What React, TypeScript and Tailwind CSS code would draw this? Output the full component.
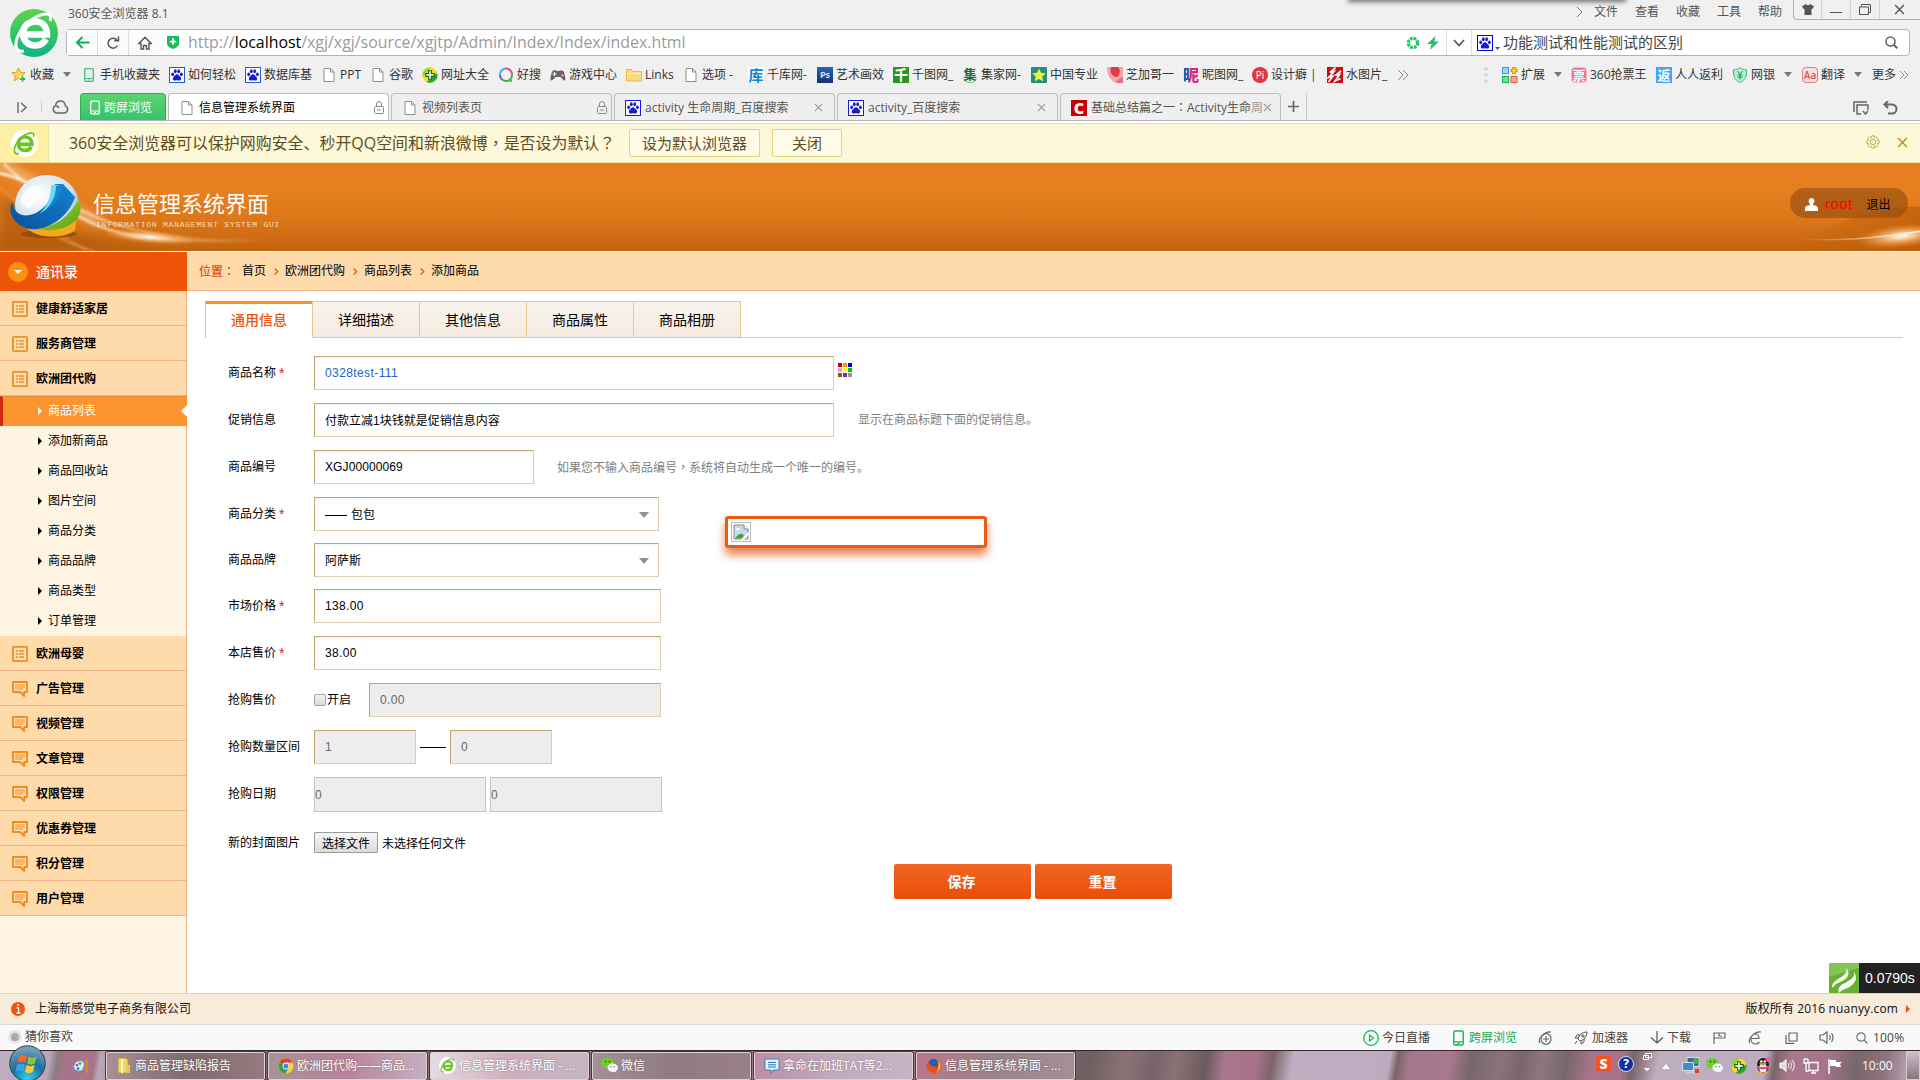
import React from 'react';

type IconName =
  | 'star' | 'phone' | 'baidu' | 'page' | 'plus' | 'so' | 'game' | 'folder' | 'ku' | 'ps' | 'qian' | 'ji'
  | 'cnstar' | 'petal' | 'ni' | 'pi' | 'hong' | 'ext' | 'ticket' | 'fan' | 'shield' | 'aa';

function Tile({ bg, fg, ch, cls = '' }: { bg: string; fg: string; ch: string; cls?: string }) {
  return (
    <span className={`flex h-4 w-4 items-center justify-center text-[13px] leading-4 font-bold ${bg} ${fg} ${cls}`}>{ch}</span>
  );
}

/* Full-width punctuation set in the centre of its em box. */
function Mid({ children }: { children: React.ReactNode }) {
  return <span className="[font-family:'Noto_Sans_CJK_TC',sans-serif]" lang="zh-TW">{children}</span>;
}

function Baidu({ frame = '#1414d8' }: { frame?: string }) {
  return (
    <svg width="16" height="16" viewBox="0 0 16 16" className="flex-none">
      <rect x="0.5" y="0.5" width="15" height="15" fill="#fff" stroke={frame} />
      <g fill="#1a1ad6">
        <ellipse cx="3.7" cy="7.3" rx="1.4" ry="1.9" />
        <ellipse cx="6.3" cy="4.3" rx="1.4" ry="2" />
        <ellipse cx="9.7" cy="4.3" rx="1.4" ry="2" />
        <ellipse cx="12.4" cy="7.3" rx="1.4" ry="1.9" />
        <path d="M8 7.2c1.7 0 2 1.500 3.300 2.600 1.300 1.100 1.300 3.700-1 3.800-1 0-1.400-.3-2.300-.3s-1.300.3-2.300.3c-2.300-.1-2.300-2.700-1-3.800C6 8.700 6.300 7.200 8 7.200z" />
      </g>
    </svg>
  );
}

function PageIcon() {
  return (
    <svg width="12" height="14" viewBox="0 0 12 14" className="flex-none">
      <path d="M1 .5h6.500L11 4v9.500H1z" fill="#fff" stroke="#8f8f8f" />
      <path d="M7.500.5V4H11" fill="none" stroke="#8f8f8f" />
    </svg>
  );
}

function PhoneIcon({ c = '#3fc178', w = 10, h = 14 }: { c?: string; w?: number; h?: number }) {
  return (
    <svg width={w} height={h} viewBox="0 0 10 14" className="flex-none">
      <rect x="0.700" y="0.700" width="8.600" height="12.600" rx="1" fill="none" stroke={c} strokeWidth="1.300" />
      <path d="M1 10.500h8M4 12h2" stroke={c} strokeWidth="1.200" />
    </svg>
  );
}

function GreenPlus({ size = 16 }: { size?: number }) {
  return (
    <svg width={size} height={size} viewBox="0 0 16 16" className="flex-none">
      <circle cx="8" cy="8" r="7.600" fill="#f8dc1c" />
      <path d="M15.400 6.500A7.600 7.600 0 0 1 4 14.500C8 14 9 10 12 8z" fill="#2ea52a" />
      <path d="M.5 9A7.600 7.600 0 0 1 9 .5C6 2 6 5 4 7z" fill="#8fd42c" />
      <path d="M8 3.200v9.600M3.200 8h9.600" stroke="#0d6e18" strokeWidth="3.800" />
      <path d="M8 4.200v7.600M4.200 8h7.600" stroke="#fff" strokeWidth="1.600" />
    </svg>
  );
}

function Icon({ n }: { n: IconName }) {
  switch (n) {
    case 'star':
      return (
        <svg width="16" height="16" viewBox="0 0 16 16">
          <path d="M7.500 1l2 4.300 4.700.5-3.400 3.200.9 4.800-4.200-2.400-4.200 2.400.9-4.800L.8 5.800l4.700-.5z" fill="#ffd45a" stroke="#e0a020" />
          <path d="M11.500 9v6M8.500 12h6" stroke="#fff" strokeWidth="4" />
          <path d="M11.500 9.300v5.500M8.800 12h5.500" stroke="#3cb34c" strokeWidth="2" />
        </svg>
      );
    case 'phone': return <PhoneIcon />;
    case 'baidu': return <Baidu frame="#1c5fc8" />;
    case 'page': return <PageIcon />;
    case 'plus': return <GreenPlus />;
    case 'so':
      return (
        <svg width="16" height="16" viewBox="0 0 16 16" fill="none" strokeWidth="2">
          <path d="M8 1.500A6 6 0 0 0 2 8" stroke="#35b2e8" />
          <path d="M8 1.500a6 6 0 0 1 6 6" stroke="#e8458c" />
          <path d="M2 8a6 6 0 0 0 3 5.200" stroke="#9a4fd0" />
          <path d="M14 7.500a6 6 0 0 1-9 5.700M11.500 12l2 2.700" stroke="#37b54a" />
        </svg>
      );
    case 'game':
      return (
        <svg width="16" height="16" viewBox="0 0 16 16">
          <path d="M3 3.500C6 2.500 7 4.500 9 4c3-1 4.500-.5 5 1.500 1 3 2 7 1 8-2 .5-3-3-5-3.500H6c-2 .5-3 4-5 3.500-1-1.500 0-8 2-10z" fill="#5d666b" />
          <path d="M4.500 5v4M2.500 7h4" stroke="#fff" strokeWidth="1.200" />
          <circle cx="11" cy="6" r="1.200" fill="#e33" />
          <circle cx="12.500" cy="8.500" r="1.200" fill="#e8a0a0" />
        </svg>
      );
    case 'folder':
      return (
        <svg width="16" height="14" viewBox="0 0 16 14">
          <path d="M.5 2V13h15V3.500H7L5.500 1.500H.5z" fill="#f9dc80" stroke="#eab93a" />
          <path d="M1 5.500h14" stroke="#fff3bd" />
        </svg>
      );
    case 'ku': return <Tile bg="bg-white" fg="text-[#0e86d8]" ch="库" cls="text-[15px]" />;
    case 'ps':
      return <span className="flex h-4 w-4 items-center justify-center bg-gradient-to-b from-[#2e63b8] to-[#12336e] text-[9px] leading-4 font-bold text-[#cfe4ff]">Ps</span>;
    case 'qian': return <Tile bg="bg-[#27951d]" fg="text-white" ch="千" cls="text-[14px]" />;
    case 'ji': return <Tile bg="bg-transparent" fg="text-[#1c6a38]" ch="集" cls="rounded-full border-b border-[#6ccf4a]" />;
    case 'cnstar':
      return (
        <svg width="16" height="16" viewBox="0 0 16 16">
          <rect width="16" height="16" rx="1" fill="#23907e" />
          <path d="M8 1.500l2 4.300 4.800.6-3.500 3.200.9 4.700L8 12l-4.200 2.300.9-4.700L1.200 6.400 6 5.800z" fill="#e8f23a" />
        </svg>
      );
    case 'petal':
      return (
        <svg width="16" height="16" viewBox="0 0 16 16">
          <path d="M0 0h16v16H9C3 13 0 8 0 0z" fill="#f0a5a8" />
          <path d="M4 0h7c3 3 2 8-1 10C6 10 2 6 4 0z" fill="#dc3b48" />
          <path d="M9 16c2-4 4-5 7-6v6z" fill="#e4707a" />
        </svg>
      );
    case 'ni':
      return (
        <span className="flex h-4 w-4 items-center justify-center bg-gradient-to-r from-[#1d5fa8] from-45% to-[#d5257f] to-45% bg-clip-text text-[16px] leading-4 font-black text-transparent">昵</span>
      );
    case 'pi':
      return <span className="flex h-4 w-4 items-center justify-center rounded-full bg-[#dc3a3a] text-[10px] leading-4 text-white">Pi</span>;
    case 'hong':
      return (
        <svg width="16" height="16" viewBox="0 0 16 16">
          <rect width="16" height="16" fill="#c50d12" />
          <path d="M8.500.5L3 5.500l4-1-5.500 6 4.500-1.500L1.500 15M14 4L8.500 8.500l4-1L8 14l5.500-2.500" fill="none" stroke="#fff" strokeWidth="1.700" />
        </svg>
      );
    case 'ext':
      return (
        <svg width="16" height="16" viewBox="0 0 16 16">
          <rect x="0.500" y="0.500" width="6" height="6" fill="#9bd4f5" stroke="#3a9ddb" />
          <path d="M12 0v7M8.500 3.500h7" stroke="#d98b00" strokeWidth="3.400" />
          <path d="M12 1v5M9.500 3.500h5" stroke="#ffd83a" strokeWidth="1.600" />
          <rect x="0.500" y="9.500" width="6" height="6" fill="#6fe09a" stroke="#1fa957" />
          <rect x="9" y="9.500" width="6" height="6" fill="#f8a596" stroke="#e0604a" />
        </svg>
      );
    case 'ticket': return <Tile bg="bg-[#f9649a]" fg="text-white" ch="票" cls="rounded-sm border border-[#f9b9d0] text-[12px]" />;
    case 'fan': return <Tile bg="bg-[#3fa6ff]" fg="text-white" ch="返" />;
    case 'shield':
      return (
        <svg width="16" height="16" viewBox="0 0 16 16" fill="none">
          <path d="M8 .7c2 1.500 4 2 6.500 2C15 9 13 13.500 8 15.500 3 13.500 1 9 1.500 2.700 4 2.700 6 2.200 8 .7z" fill="#b7f0cf" stroke="#43b77a" />
          <path d="M5.500 4L8 7.500 10.500 4M8 7.500v5M5.500 8h5M5.500 10h5" stroke="#1d9a58" />
        </svg>
      );
    case 'aa':
      return <span className="flex h-4 w-4 items-center justify-center rounded-sm border border-[#dd7d7d] bg-[#fbdede] text-[10px] leading-4 font-semibold text-[#d25555]">Aa</span>;
  }
}

function Caret({ className = '' }: { className?: string }) {
  return (
    <svg width="8" height="5" viewBox="0 0 8 5" className={`flex-none ${className}`}>
      <path d="M0 0h8L4 5z" fill="#777" />
    </svg>
  );
}

const bookmarks: { w: string; icon: IconName; text: string; caret?: boolean }[] = [
  { w: 'w-[70px]', icon: 'star', text: '收藏', caret: true },
  { w: 'w-[88px]', icon: 'phone', text: '手机收藏夹' },
  { w: 'w-[76px]', icon: 'baidu', text: '如何轻松' },
  { w: 'w-[76px]', icon: 'baidu', text: '数据库基' },
  { w: 'w-[49px]', icon: 'page', text: 'PPT' },
  { w: 'w-[52px]', icon: 'page', text: '谷歌' },
  { w: 'w-[76px]', icon: 'plus', text: '网址大全' },
  { w: 'w-[52px]', icon: 'so', text: '好搜' },
  { w: 'w-[76px]', icon: 'game', text: '游戏中心' },
  { w: 'w-[57px]', icon: 'folder', text: 'Links' },
  { w: 'w-[65px]', icon: 'page', text: '选项 -' },
  { w: 'w-[69px]', icon: 'ku', text: '千库网-' },
  { w: 'w-[76px]', icon: 'ps', text: '艺术画效' },
  { w: 'w-[69px]', icon: 'qian', text: '千图网_' },
  { w: 'w-[69px]', icon: 'ji', text: '集家网-' },
  { w: 'w-[76px]', icon: 'cnstar', text: '中国专业' },
  { w: 'w-[76px]', icon: 'petal', text: '芝加哥一' },
  { w: 'w-[69px]', icon: 'ni', text: '昵图网_' },
  { w: 'w-[75px]', icon: 'pi', text: '设计癖 |' },
  { w: 'w-[70px]', icon: 'hong', text: '水图片_' },
];

const tools: { w: string; icon: IconName; text: string; caret?: boolean }[] = [
  { w: 'w-[69px]', icon: 'ext', text: '扩展', caret: true },
  { w: 'w-[85px]', icon: 'ticket', text: '360抢票王' },
  { w: 'w-[76px]', icon: 'fan', text: '人人返利' },
  { w: 'w-[70px]', icon: 'shield', text: '网银', caret: true },
  { w: 'w-[70px]', icon: 'aa', text: '翻译', caret: true },
];

function Bookmark({ b }: { b: (typeof bookmarks)[number] }) {
  return (
    <div className={`flex flex-none items-center whitespace-nowrap ${b.w}`}>
      <span className="mr-[3px] flex w-4 flex-none items-center justify-center"><Icon n={b.icon} /></span>
      <span>{b.text}</span>
      {b.caret && <Caret className="ml-[9px]" />}
    </div>
  );
}

function ELogo({ size, disc }: { size: number; disc: boolean }) {
  return (
    <svg width={size} height={size} viewBox="0 0 48 48" className="flex-none">
      <defs>
        <linearGradient id="eg" x1="0" y1="0" x2="0" y2="1">
          <stop offset="0" stopColor="#5fd34b" />
          <stop offset="1" stopColor="#0cb587" />
        </linearGradient>
      </defs>
      <circle cx="24" cy="24" r="24" fill={disc ? 'url(#eg)' : '#ffffff'} />
      <g fill="none" stroke={disc ? '#fff' : '#6cc424'}>
        <path d="M16 25.500h21c0-8-4.500-13-12-13-7.500 0-12 5.500-12 12C13 31.500 18 36.500 25 36.500c5.500 0 9-2.500 11-6.500" strokeWidth="6.500" />
        <path d="M14 42C5 44 4 35 8.500 26 14 14 28 5 36.500 5c4 0 5 3 3.500 7" strokeWidth="3" />
      </g>
    </svg>
  );
}

function Cross({ c = '#999', s = 9 }: { c?: string; s?: number }) {
  return (
    <svg width={s} height={s} viewBox="0 0 10 10" className="flex-none">
      <path d="M1 1l8 8M9 1L1 9" stroke={c} strokeWidth="1.300" />
    </svg>
  );
}

function Lock() {
  return (
    <svg width="10" height="13" viewBox="0 0 10 13" className="flex-none" fill="none" stroke="#8a8a8a">
      <rect x="0.500" y="5.500" width="9" height="7" rx="1" />
      <path d="M2.500 5.500V3a2.500 2.500 0 0 1 5 0v2.500M3 9h4" />
    </svg>
  );
}

function TitleRow() {
  return (
    <div className="flex h-[29px] items-start">
      <div className="ml-[68px] w-[1281px] pt-[6px] text-[12px] leading-4 text-[#555]">360安全浏览器 8.1</div>
      <div className="-mt-1 h-1 w-[276px] shadow-[0_1px_5px_1px_rgba(0,0,0,0.55)]" />
      <div className="flex flex-1 items-start text-[12px] leading-4 text-[#555]">
        <div className="-ml-[51px] flex w-[219px] gap-[17px] pt-[4px] whitespace-nowrap">
          <svg width="7" height="12" viewBox="0 0 7 12" className="mt-[2px] -mr-[6px] ml-[2px]"><path d="M1 1l5 5-5 5" fill="none" stroke="#777" /></svg>
          <span>文件</span><span>查看</span><span>收藏</span><span>工具</span><span>帮助</span>
        </div>
        <div className="flex h-5 flex-1 rounded-bl border-b border-l border-[#b0b0b0]">
          <div className="flex w-7 items-center justify-center border-r border-[#d5d5d5]">
            <svg width="12" height="11" viewBox="0 0 12 11"><path d="M3.500 0L0 2.500 1.500 5l1-.5V11h7V4.500l1 .5L12 2.500 8.500 0C7.500 1.500 4.500 1.500 3.500 0z" fill="#555" /></svg>
          </div>
          <div className="flex w-[29px] items-center justify-center border-r border-[#d5d5d5]"><span className="mt-[5px] h-px w-3 bg-[#555]" /></div>
          <div className="flex w-[29px] items-center justify-center border-r border-[#d5d5d5]">
            <svg width="12" height="11" viewBox="0 0 12 11" fill="none" stroke="#555"><path d="M2.500 2.500V.5h9v8h-2" /><rect x="0.500" y="3" width="9" height="7.500" /></svg>
          </div>
          <div className="flex flex-1 items-center justify-center pr-[2px]"><Cross c="#555" s={11} /></div>
        </div>
      </div>
    </div>
  );
}

function AddressBar() {
  return (
    <div className="ml-[66px] flex h-[27px] w-[1844px] items-center rounded-sm border border-[#b3b3b3] bg-white">
      <div className="flex h-full w-[31px] items-center justify-center border-r border-[#ddd] bg-[#fbfbfb]">
        <svg width="15" height="13" viewBox="0 0 15 13"><path d="M14.500 6.500H2M7.500 1L2 6.500 7.500 12" fill="none" stroke="#12ae54" strokeWidth="2" /></svg>
      </div>
      <div className="flex h-full w-[31px] items-center justify-center border-r border-[#ddd] bg-[#fbfbfb]">
        <svg width="14" height="14" viewBox="0 0 14 14" fill="none" stroke="#555" strokeWidth="1.500"><path d="M11.500 9.500A5 5 0 1 1 11 4" /><path d="M12.500.5v4.300H8.300" /></svg>
      </div>
      <div className="flex h-full w-[31px] items-center justify-center bg-[#fbfbfb]">
        <svg width="14" height="14" viewBox="0 0 14 14" fill="none" stroke="#555" strokeWidth="1.400"><path d="M.8 7.500L7 1.200l6.200 6.300H11V13H8.500V9.500h-3V13H3V7.500z" /></svg>
      </div>
      <svg width="12" height="13" viewBox="0 0 13 14" className="ml-[7px] flex-none">
        <path d="M0 0h13v8c0 3-3 4.500-6.500 6C3 12.500 0 11 0 8z" fill="#1fb65c" />
        <path d="M6.500 2.500v7M3 6h7" stroke="#fff" strokeWidth="2" />
      </svg>
      <span className="-mt-px ml-[9px] w-[1218px] flex-none text-[15.900px] leading-6 whitespace-nowrap text-[#9b9b9b]">
        http://<span className="text-black">localhost</span>/xgj/xgj/source/xgjtp/Admin/Index/Index/index.html
      </span>
      <svg width="14" height="14" viewBox="0 0 14 14" className="flex-none">
        <circle cx="7" cy="7" r="4.600" fill="none" stroke="#2bc26b" strokeWidth="3.400" strokeDasharray="2.700 0.913" />
      </svg>
      <svg width="12" height="14" viewBox="0 0 12 14" className="ml-[7px] flex-none"><path d="M8.500 0L0 8h4.500L3 14l9-8.500H7.500z" fill="#2bc26b" /></svg>
      <div className="ml-[7px] flex h-full w-[26px] flex-none items-center justify-center border-x border-[#ddd]">
        <svg width="12" height="8" viewBox="0 0 12 8"><path d="M1 1l5 5.500L11 1" fill="none" stroke="#555" strokeWidth="1.700" /></svg>
      </div>
      <div className="ml-[5px] flex items-center"><Baidu frame="#0000f0" /><svg width="5" height="3" viewBox="0 0 5 3" className="mt-3 ml-[2px]"><path d="M0 0h5L2.500 3z" fill="#555" /></svg></div>
      <span className="-mt-px ml-[3px] text-[15px] leading-6 whitespace-nowrap text-[#444]">功能测试和性能测试的区别</span>
      <svg width="13" height="13" viewBox="0 0 13 13" className="mr-[11px] ml-auto flex-none" fill="none" stroke="#666" strokeWidth="1.600"><circle cx="5.500" cy="5.500" r="4.500" /><path d="M8.800 8.800l3.500 3.500" strokeWidth="2.200" /></svg>
    </div>
  );
}

function Tab({ icon, text, lock, active, cls, gap = 'ml-[4px]' }: { icon: React.ReactNode; text: React.ReactNode; lock?: boolean; active?: boolean; cls?: string; gap?: string }) {
  return (
    <div className={`mr-[2px] flex h-full w-[221px] flex-none items-center rounded-t border border-b-0 border-[#bcbcbc] pt-px ${active ? 'bg-white text-black' : 'bg-[#efefef] text-[#555]'} ${cls ?? ''}`}>
      {icon}
      <span className={`flex-none whitespace-nowrap ${gap}`}>{text}</span>
      <span className={`ml-auto flex flex-none ${lock ? 'mr-[4px]' : 'mr-[11px]'}`}>{lock ? <Lock /> : <Cross />}</span>
    </div>
  );
}

function TabStrip() {
  return (
    <div className="flex h-[28px] items-stretch border-b border-[#b5b5b5] text-[12px] leading-4">
      <div className="flex w-[42px] items-center border-0 pt-px pl-[17px]">
        <svg width="11" height="11" viewBox="0 0 11 11" fill="none" stroke="#666" strokeWidth="1.400"><path d="M1 0v11M4 1l5 4.500L4 10" /></svg>
        <span className="ml-auto h-3 w-px bg-[#ccc]" />
      </div>
      <div className="flex w-[38px] items-center pt-px pl-[10px]">
        <svg width="17" height="14" viewBox="0 0 17 14" fill="none" stroke="#666" strokeWidth="1.400"><path d="M4.500 13a3.800 3.800 0 0 1-.8-7.300C3.500 2.500 6 1 8.500 1s4.800 1.700 4.700 4.700A3.800 3.800 0 0 1 12.500 13zM4 6c1.500 0 2.500.8 3 2" /></svg>
      </div>
      <div className="flex w-[86px] items-center rounded-t border border-b-0 border-[#2fae58] bg-gradient-to-b from-[#5ad46f] to-[#35c46a] pt-px pl-[9px] text-white">
        <PhoneIcon c="#fff" w={10} h={15} />
        <span className="ml-[4px]">跨屏浏览</span>
      </div>
      <div className="w-[2px]" />
      <Tab active lock icon={<span className="ml-[12px]"><PageIcon /></span>} gap="ml-[6px]" text="信息管理系统界面" cls="mb-[-1px]" />
      <Tab lock icon={<span className="ml-[12px]"><PageIcon /></span>} gap="ml-[6px]" text="视频列表页" />
      <Tab icon={<span className="ml-[10px]"><Baidu frame="#1a1ae0" /></span>} text="activity 生命周期_百度搜索" />
      <Tab icon={<span className="ml-[10px]"><Baidu frame="#1a1ae0" /></span>} text="activity_百度搜索" />
      <Tab
        icon={<span className="ml-[10px] flex h-4 w-4 flex-none items-center justify-center bg-[#c80000] text-[16px] leading-4 font-black text-white">C</span>}
        text={<>基础总结篇之一<Mid>：</Mid>Activity生命<span className="text-[#999]">周</span></>}
      />
      <div className="-ml-[2px] flex w-[26px] items-center justify-center border-r border-[#ccc]">
        <svg width="11" height="11" viewBox="0 0 11 11"><path d="M5.500 0v11M0 5.500h11" stroke="#666" strokeWidth="1.700" /></svg>
      </div>
      <div className="mr-[22px] ml-auto flex items-center gap-[14px] pt-[3px]">
        <svg width="16" height="15" viewBox="0 0 16 15" fill="none" stroke="#666" strokeWidth="1.500"><path d="M1 11V1h13M8 13H4V4h11v5" /><path d="M10 10l2.500 3L15 10" /></svg>
        <svg width="15" height="14" viewBox="0 0 15 14" fill="none" stroke="#666" strokeWidth="2"><path d="M5 0L1.500 3.500 5 7M2 3.500h7a4.500 4.500 0 0 1 0 9H5" /></svg>
      </div>
    </div>
  );
}

function Notice() {
  return (
    <div className="flex h-[40px] items-center border-y border-[#ecdf8d] bg-[#fef8da] text-[15px] leading-5 text-[#5c4c20]">
      <div className="flex h-full w-[49px] items-center justify-center border-r border-[#f0e19a] bg-[#fdf0a4]"><ELogo size={27} disc={false} /></div>
      <span className="-mt-[2px] ml-[20px] w-[560px] text-[15.950px] whitespace-nowrap">360安全浏览器可以保护网购安全、秒开QQ空间和新浪微博<Mid>，</Mid>是否设为默认<Mid>？</Mid></span>
      <div className="flex h-[28px] w-[131px] items-center justify-center rounded-[2px] border border-[#e3d478] bg-[#fffbe9]">设为默认浏览器</div>
      <div className="ml-[12px] flex h-[28px] w-[70px] items-center justify-center rounded-[2px] border border-[#e3d478] bg-[#fffbe9]">关闭</div>
      <svg width="16" height="16" viewBox="0 0 16 16" className="mb-[2px] ml-auto" fill="none" stroke="#c9a95c"><circle cx="8" cy="8" r="2.800" /><path d="M6.800-.2h2.400l.5 2 1.800-1 1.700 1.700-1 1.800 2 .5v2.400l-2 .5 1 1.800-1.700 1.700-1.800-1-.5 2H6.800l-.5-2-1.800 1-1.700-1.700 1-1.800-2-.5V4.800l2-.5-1-1.800 1.700-1.700 1.800 1z" transform="translate(0 2)" /></svg>
      <span className="mr-[12px] mb-px ml-[16px]"><Cross c="#bd8f1a" s={11} /></span>
    </div>
  );
}

function HeaderGlow() {
  return (
    <svg width="330" height="88" viewBox="0 0 330 88" className="absolute top-0 left-0">
      <defs>
        <filter id="b1" x="-20%" y="-60%" width="140%" height="220%"><feGaussianBlur stdDeviation="4" /></filter>
        <filter id="b2" x="-20%" y="-60%" width="140%" height="220%"><feGaussianBlur stdDeviation="1" /></filter>
        <linearGradient id="fade" x1="0" x2="1"><stop offset="0" stopColor="#fff" stopOpacity=".9" /><stop offset="0.500" stopColor="#ffe1bd" stopOpacity=".8" /><stop offset="1" stopColor="#ffb060" stopOpacity="0" /></linearGradient>
        <radialGradient id="spot"><stop offset="0" stopColor="#fff" /><stop offset="0.300" stopColor="#ffdcb0" stopOpacity=".8" /><stop offset="1" stopColor="#f59a40" stopOpacity="0" /></radialGradient>
      </defs>
      <path d="M0 30C40 60 90 84 170 88H0z" fill="#a9540a" opacity=".55" filter="url(#b1)" />
      <path d="M-5 2C30 10 60 40 100 60" stroke="#ffe0c0" strokeWidth="8" fill="none" opacity=".6" filter="url(#b1)" />
      <g fill="none" filter="url(#b2)">
        <path d="M-2 10c24 4 40 16 56 28 40 28 70 36 110 38 40 3 70 2 110 1" stroke="url(#fade)" strokeWidth="2.500" />
        <path d="M4 0c10 14 30 24 60 38 40 24 90 40 190 39" stroke="url(#fade)" strokeWidth="1.500" />
        <path d="M-2 24c30 20 40 50 96 64" stroke="#f2a050" strokeWidth="2" opacity=".6" />
        <path d="M50 64l36 24" stroke="#f0a050" strokeWidth="2" opacity=".5" />
      </g>
      <ellipse cx="150" cy="74" rx="48" ry="7" fill="url(#spot)" transform="rotate(5 150 74)" />
    </svg>
  );
}

function Globe() {
  return (
    <svg width="74" height="66" viewBox="0 0 74 66">
      <defs>
        <radialGradient id="sph" cx="0.400" cy="0.350" r="0.700"><stop offset="0" stopColor="#fff" /><stop offset="0.700" stopColor="#cfe2ee" /><stop offset="1" stopColor="#6fa9cc" /></radialGradient>
        <linearGradient id="blu" x1="0" y1="1" x2="1" y2="0"><stop offset="0" stopColor="#0b4fa0" /><stop offset="1" stopColor="#1286cf" /></linearGradient>
        <linearGradient id="grn" x1="0" y1="0" x2="1" y2="1"><stop offset="0" stopColor="#b9e22a" /><stop offset="1" stopColor="#4f9c1c" /></linearGradient>
      </defs>
      <ellipse cx="40" cy="60" rx="28" ry="4" fill="#7c3c05" opacity=".55" />
      <ellipse cx="38" cy="31" rx="32" ry="30" fill="url(#sph)" />
      <path d="M14 50c6 8 16 12.500 28 12.500 12 0 20-2.500 24-6.500l2-13-20 8z" fill="#f6a81c" />
      <path d="M70 25c3 8 2 17-4 22-9 8-22 11-40 8 22-2 34-13 44-30z" fill="url(#grn)" />
      <path d="M4 28C4 38 12 43 21 41c14-3 23-17 25-31h8l12 13C61 38 48 52 28 55 12 57-2 44 2 30z" fill="url(#blu)" />
      <path d="M42 11h8C49 23 41 35 30 40c8-7 12-17 12-29z" fill="#69dcff" />
      <path d="M38 34c6-6 9-14 9-22l6-1c-1 12-6 19-15 23z" fill="#1286cf" />
      <path d="M12 24c4-8 12-14 18-12 4 3-2 6 0 10 2 5-6 6-8 12-4 1-12-3-10-10z" fill="#fff" opacity=".8" />
    </svg>
  );
}

function AppHeader() {
  return (
    <div className="relative flex h-[89px] items-start overflow-hidden border-b border-white bg-gradient-to-b from-[#e67f1f] from-35% via-[#dc7719] via-65% to-[#c1630f]">
      <HeaderGlow />
      <svg width="130" height="88" viewBox="0 0 130 88" className="absolute top-0 right-0">
        <defs>
          <radialGradient id="fl"><stop offset="0" stopColor="#fff" /><stop offset="0.250" stopColor="#ffd9a8" stopOpacity=".9" /><stop offset="1" stopColor="#f08a2a" stopOpacity="0" /></radialGradient>
          <linearGradient id="fr" x1="0" x2="1"><stop offset="0" stopColor="#ffe0b8" stopOpacity="0" /><stop offset="1" stopColor="#fff4e4" /></linearGradient>
          <linearGradient id="fd" x1="0" x2="1"><stop offset="0" stopColor="#b95b08" stopOpacity="0" /><stop offset="1" stopColor="#b95b08" stopOpacity=".7" /></linearGradient>
        </defs>
        <path d="M0 88c40-30 90-46 130-44v44z" fill="url(#fd)" />
        <ellipse cx="112" cy="73" rx="48" ry="12" fill="url(#fl)" transform="rotate(-6 112 73)" />
        <path d="M10 76c50 3 90-3 122-8" fill="none" stroke="url(#fr)" strokeWidth="1.500" />
      </svg>
      <div className="relative mt-[11px] ml-[9px]"><Globe /></div>
      <div className="relative mt-[27px] ml-[10px] text-white">
        <div className="text-[22px] leading-[30px] whitespace-nowrap">信息管理系统界面</div>
        <div className="ml-[3px] pt-px text-[8px] leading-[8px] tracking-[0.780px] whitespace-nowrap text-[#fbd9b4] [font-family:'Liberation_Mono',monospace]">INFORMATION MANAGEMENT SYSTEM GUI</div>
      </div>
      <div className="relative mt-[25px] mr-[12px] ml-auto flex h-[30px] w-[118px] items-center rounded-full bg-[#8f4b10]/60 pt-[2px] pl-[15px]">
        <svg width="13" height="13" viewBox="0 0 13 13" fill="#fff"><path d="M6.500 0a3 3.200 0 0 1 1.700 5.800V7.300c2.500.3 4.800.9 4.800 3V13H0v-2.700c0-2.100 2.300-2.700 4.800-3V5.800A3 3.200 0 0 1 6.500 0z" /></svg>
        <span className="ml-[7px] text-[15px] leading-5 tracking-[0.400px] text-[#fe0000] [font-family:'Liberation_Sans',sans-serif]">root</span>
        <span className="ml-[14px] pt-px text-[12px] text-black">退出</span>
      </div>
    </div>
  );
}

function ListIcon() {
  return (
    <svg width="16" height="16" viewBox="0 0 16 16" className="flex-none">
      <rect x="0.900" y="0.900" width="14.200" height="14.200" rx="1" fill="#ffe0b4" stroke="#f58a1c" strokeWidth="1.800" />
      <path d="M4 5h2M7 5h5M4 8h2M7 8h5M4 11h2M7 11h5" stroke="#f58a1c" strokeWidth="1.700" />
    </svg>
  );
}
function ChatIcon() {
  return (
    <svg width="16" height="16" viewBox="0 0 16 16" className="flex-none">
      <path d="M1 1h14v10h-2.800v4l-4-4H1z" fill="#ffe0b4" stroke="#f58a1c" strokeWidth="1.900" strokeLinejoin="round" />
      <path d="M3 4h10M3 6h10M3 8h8" stroke="#f58a1c" />
    </svg>
  );
}

function MenuItem({ text, chat }: { text: string; chat?: boolean }) {
  return (
    <div className="flex h-[35px] items-center border-b border-[#efb383] bg-[#ffdaaa] pt-[2px] pl-[12px] text-[12px] font-bold text-black">
      {chat ? <ChatIcon /> : <ListIcon />}
      <span className="ml-[8px]">{text}</span>
    </div>
  );
}

const sub = ['商品列表', '添加新商品', '商品回收站', '图片空间', '商品分类', '商品品牌', '商品类型', '订单管理'];

function Sidebar() {
  return (
    <div className="flex w-[187px] flex-none flex-col border-r border-[#ebb483] bg-[#fff3e1]">
      <div className="mr-[-1px] flex h-[39px] items-center bg-[#ed540a] pt-px pl-[8px] text-[14px] font-medium text-white">
        <svg width="20" height="20" viewBox="0 0 20 20"><circle cx="10" cy="10" r="10" fill="#ff8f0c" /><path d="M6 8h8l-4 4z" fill="#fff" /></svg>
        <span className="ml-[8px]">通讯录</span>
      </div>
      {['健康舒适家居', '服务商管理', '欧洲团代购'].map((t) => <MenuItem key={t} text={t} />)}
      {sub.map((t, i) => (
        <div key={t} className={`flex h-[30px] items-center text-[12px] ${i === 0 ? 'mr-[-1px] border-t border-l-3 border-t-[#e08a3a] border-l-[#d22a0c] bg-[#fb942f] pb-[2px] pl-[35px] text-white' : 'pl-[38px] text-black'}`}>
          <svg width="4" height="8" viewBox="0 0 4 8"><path d="M0 0l4 4-4 4z" fill={i === 0 ? '#fff' : '#000'} /></svg>
          <span className="ml-[6px]">{t}</span>
          {i === 0 && <svg width="6" height="12" viewBox="0 0 6 12" className="ml-auto"><path d="M6 0L0 6l6 6z" fill="#fff" /></svg>}
        </div>
      ))}
      <MenuItem text="欧洲母婴" />
      {['广告管理', '视频管理', '文章管理', '权限管理', '优惠券管理', '积分管理', '用户管理'].map((t) => <MenuItem key={t} text={t} chat />)}
    </div>
  );
}

function Breadcrumb() {
  const chev = <svg width="5" height="7" viewBox="0 0 5 7"><path d="M.7.500l3 3-3 3" fill="none" stroke="#ec5a12" strokeWidth="1.300" /></svg>;
  return (
    <div className="flex h-[39px] items-center border-b border-[#f1b48c] bg-[#ffdaaa] pl-[12px] text-[12px] leading-4 text-black">
      <span className="w-[43px] font-medium whitespace-nowrap text-[#dd5210]">位置<Mid>：</Mid></span>
      <span className="mr-[8px]">首页</span>{chev}
      <span className="mr-[8px] ml-[6px]">欧洲团代购</span>{chev}
      <span className="mr-[8px] ml-[6px]">商品列表</span>{chev}
      <span className="ml-[6px]">添加商品</span>
    </div>
  );
}

function Field({ w, children, off, cls = '' }: { w: string; children: React.ReactNode; off?: boolean; cls?: string }) {
  return (
    <div className={`flex h-[34px] flex-none items-center border border-t-[#c0a473] border-r-[#e0cfae] border-b-[#e0cfae] border-l-[#c0a473] pl-[10px] text-[12px] ${off ? 'bg-[#ededed] text-[#666]' : 'bg-white text-black shadow-[inset_0_3px_3px_-1px_#f3f6f7]'} ${w} ${cls}`}>
      {children}
    </div>
  );
}

function Row({ label, req, h = 'h-[47px]', children }: { label: string; req?: boolean; h?: string; children: React.ReactNode }) {
  return (
    <div className={`flex items-start ${h}`}>
      <div className="flex h-[33px] w-[86px] flex-none items-center text-[12px] whitespace-nowrap text-black">
        {label}{req && <span className="ml-[3px] text-[14px] leading-4 text-[#e02020]">*</span>}
      </div>
      {children}
    </div>
  );
}

function SelectArrow() {
  return <svg width="10" height="6" viewBox="0 0 10 6" className="mr-[9px] ml-auto"><path d="M0 0h10L5 6z" fill="#909090" /></svg>;
}

const palette = ['bg-[#c80000]', 'bg-[#ff9600]', 'bg-[#0000ee]', 'bg-[#ff96c8]', 'bg-[#ffff00]', 'bg-[#00c800]', 'bg-[#8b5a1e]', 'bg-[#7828b4]', 'bg-[#969696]'];

function Form() {
  const num = 'tracking-[0.330px]';
  return (
    <div className="relative pt-[18px] pl-[41px]">
      <Row label="商品名称" req>
        <Field w="w-[520px]"><span className="tracking-[0.400px] text-[#1b66cc]">0328test-111</span></Field>
        <div className="mt-[7px] ml-[4px] grid grid-cols-3 gap-px">
          {palette.map((p) => <span key={p} className={`h-1 w-1 ${p}`} />)}
        </div>
      </Row>
      <Row label="促销信息">
        <Field w="w-[520px]" cls="pt-px">付款立减1块钱就是促销信息内容</Field>
        <span className="mt-[9px] ml-[24px] text-[12px] leading-4 text-[#808080]">显示在商品标题下面的促销信息。</span>
      </Row>
      <Row label="商品编号">
        <Field w="w-[220px]"><span className="tracking-[0.100px]">XGJ00000069</span></Field>
        <span className="mt-[9px] ml-[23px] text-[12px] leading-4 text-[#808080]">如果您不输入商品编号<Mid>，</Mid>系统将自动生成一个唯一的编号。</span>
      </Row>
      <Row label="商品分类" req h="h-[46px]">
        <Field w="w-[345px]" cls="pt-[2px]"><span className="mt-px mr-[4px] h-px w-[22px] bg-black" />包包<SelectArrow /></Field>
      </Row>
      <Row label="商品品牌" h="h-[46px]"><Field w="w-[345px]" cls="pt-[2px]">阿萨斯<SelectArrow /></Field></Row>
      <Row label="市场价格" req><Field w="w-[347px]"><span className={num}>138.00</span></Field></Row>
      <Row label="本店售价" req><Field w="w-[347px]"><span className={num}>38.00</span></Field></Row>
      <Row label="抢购售价">
        <div className="flex h-[33px] w-[55px] items-center text-[12px]">
          <span className="mr-[1px] h-3 w-3 rounded-[2px] border border-[#a5a5a5] bg-gradient-to-b from-[#f3f3f3] to-[#dadada]" />开启
        </div>
        <Field w="w-[292px]" off><span className={num}>0.00</span></Field>
      </Row>
      <Row label="抢购数量区间">
        <Field w="w-[102px]" off>1</Field>
        <span className="mt-[17px] mr-[4px] ml-[4px] h-px w-[26px] bg-black" />
        <Field w="w-[102px]" off>0</Field>
      </Row>
      <Row label="抢购日期" h="h-[49px]">
        <div className="mr-[4px] flex h-[35px] w-[172px] items-center border border-[#c4c4c4] bg-[#ededed] text-[12px] text-[#666]">0</div>
        <div className="flex h-[35px] w-[172px] items-center border border-[#c4c4c4] bg-[#ededed] text-[12px] text-[#666]">0</div>
      </Row>
      <Row label="新的封面图片" h="h-[38px]">
        <div className="mt-[6px] flex items-center text-[12px] text-black">
          <span className="flex h-[21px] w-[64px] items-center justify-center rounded-[1px] border border-[#9a9a9a] bg-gradient-to-b from-[#f6f6f6] to-[#dcdcdc] pt-[2px]">选择文件</span>
          <span className="ml-[4px] pt-[2px]">未选择任何文件</span>
        </div>
      </Row>
      <div className="ml-[666px] flex gap-[4px] text-[14px] font-bold text-white">
        <div className="flex h-[35px] w-[137px] items-center justify-center rounded-[2px] bg-gradient-to-b from-[#f26522] to-[#e94e04] pt-[2px] pr-[2px]">保存</div>
        <div className="flex h-[35px] w-[137px] items-center justify-center rounded-[2px] bg-gradient-to-b from-[#f26522] to-[#e94e04] pt-[2px] pr-[2px]">重置</div>
      </div>
      <div className="absolute top-[178px] left-[538px] flex h-[32px] w-[262px] items-center rounded-[3px] border-3 border-[#ef5a12] bg-white pl-[3px] shadow-[0_7px_10px_#e8834f]">
        <svg width="20" height="20" viewBox="0 0 20 20">
          <rect x="0.500" y="0.500" width="19" height="19" fill="#fff" stroke="#bdbdbd" />
          <path d="M3 3h10l4 4v10H3z" fill="#c6d8f2" stroke="#8a8a8a" />
          <path d="M13 3v4h4" fill="#fff" stroke="#8a8a8a" />
          <path d="M4 16.500c3-5 7-6 9-3l-2 3z" fill="#4aa52e" />
          <path d="M4 8c2-3 5-2 5 0z" fill="#fff" />
          <path d="M10 19l8-8" stroke="#fff" strokeWidth="2" />
        </svg>
      </div>
    </div>
  );
}

function FormTabs() {
  return (
    <div className="mt-[10px] mr-[17px] ml-[18px] flex h-[37px] text-[14px] text-black">
      <div className="flex w-[107px] items-center justify-center border-t-3 border-l border-t-[#fa932e] border-l-[#e8c78f] bg-white pb-[1px] font-medium text-[#ec5510]">通用信息</div>
      {['详细描述', '其他信息', '商品属性', '商品相册'].map((t) => (
        <div key={t} className="flex w-[107px] items-center justify-center border-y border-l border-[#e8c78f] bg-gradient-to-b from-[#f7f4ee] to-[#f6eadf] pt-[1px]">{t}</div>
      ))}
      <div className="flex-1 border-b border-l border-[#e8c78f]" />
    </div>
  );
}

function Trace() {
  return (
    <div className="absolute right-0 bottom-0 flex h-[30px] w-[91px] bg-[#222]">
      <svg width="30" height="30" viewBox="0 0 30 30">
        <rect width="30" height="30" fill="#66b132" />
        <path d="M0 0h30v5L0 14z" fill="#83c657" />
        <path d="M17 5c2 5-3 8-8 11-5 3-7 6-5 9 1-4 6-5 11-8 5-3 6-8 2-12zM25 9c1 6-4 8-9 11-5 2-8 6-6 10 3-4 9-4 13-8 5-4 5-9 2-13z" fill="#f3f9ee" />
      </svg>
      <span className="pl-[6px] text-[14px] leading-[31px] text-white">0.0790s</span>
    </div>
  );
}

function Footer() {
  return (
    <div className="flex h-[31px] items-center border-t border-[#e6cfb4] bg-[#f9ebd9] text-[12px] text-[#111]">
      <svg width="14" height="14" viewBox="0 0 14 14" className="ml-[11px]"><circle cx="7" cy="7" r="7" fill="#ee560c" /><path d="M6 3h2M5.500 6H7.500v5M5.500 11h4" stroke="#fff" strokeWidth="1.600" /></svg>
      <span className="ml-[10px]">上海新感觉电子商务有限公司</span>
      <span className="mr-[8px] ml-auto text-[12px] tracking-[0.140px] [font-family:'Open_Sans','Noto_Sans_CJK_SC',sans-serif]">版权所有 2016 nuanyy.com</span>
      <svg width="4" height="8" viewBox="0 0 4 8" className="mr-[10px]"><path d="M0 0l4 4-4 4z" fill="#ee560c" /></svg>
    </div>
  );
}

function StatusBar() {
  return (
    <div className="flex h-[26px] items-center border-t border-[#d8d8d8] bg-[#f9f9f9] text-[12px] leading-4 whitespace-nowrap text-[#444]">
      <svg width="14" height="14" viewBox="0 0 14 14" className="mb-[2px] ml-[8px]"><circle cx="7" cy="7" r="6.800" fill="#e3e3e3" /><circle cx="7" cy="7" r="4" fill="#aaa" /></svg>
      <span className="mb-px ml-[3px]">猜你喜欢</span>
      <div className="ml-auto flex w-[557px] items-center">
        <div className="flex w-[90px] items-center">
          <svg width="16" height="16" viewBox="0 0 16 16" fill="none" stroke="#18b65a"><circle cx="8" cy="8" r="7.300" strokeWidth="1.300" /><path d="M6.500 5l4 3-4 3z" strokeWidth="1.200" /></svg>
          <span className="ml-[3px]">今日直播</span>
        </div>
        <div className="flex w-[85px] items-center text-[#10ab50]"><PhoneIcon c="#18b65a" w={11} h={16} /><span className="ml-[5px]">跨屏浏览</span></div>
        <svg width="15" height="14" viewBox="0 0 15 14" className="mr-[21px]" fill="none" stroke="#666" strokeWidth="1.200"><ellipse cx="8" cy="8" rx="5" ry="5.300" /><path d="M2 12C-1 8 7 0 13 1M8 5v6M5 8h6" /></svg>
        <div className="flex w-[76px] items-center">
          <svg width="14" height="14" viewBox="0 0 14 14" fill="none" stroke="#555"><path d="M4 8c1-4 4-7 9-7 0 5-3 8-7 9zM4.500 7H1l2-3h3M7 9.500V13l3-2V8M3 10l-2 3" /><circle cx="9" cy="5" r="1.200" /></svg>
          <span className="ml-[4px]">加速器</span>
        </div>
        <div className="flex w-[63px] items-center">
          <svg width="14" height="13" viewBox="0 0 14 13" fill="none" stroke="#555" strokeWidth="1.200"><path d="M7 0v12M1 6.500L7 12l6-5.500" /></svg>
          <span className="ml-[3px]">下载</span>
        </div>
        <svg width="13" height="12" viewBox="0 0 13 12" className="mr-[22px]" fill="none" stroke="#666" strokeWidth="1.200"><path d="M1 12V1h11v5H1M6 1v3h3" /></svg>
        <svg width="14" height="14" viewBox="0 0 14 14" className="mr-[23px]" fill="none" stroke="#666" strokeWidth="1.200"><path d="M4 7.500h7C11 4 9 3 7.500 3 5 3 3 5 3 8c0 3 2 5 4.500 5 2 0 3-1 4-2M2 12C-1 8 7 0 13 1" /></svg>
        <svg width="13" height="12" viewBox="0 0 13 12" className="mr-[21px]" fill="none" stroke="#666" strokeWidth="1.200"><path d="M4 1h8v8H4zM1 3v8.400h8" /></svg>
        <svg width="15" height="13" viewBox="0 0 15 13" className="mr-[22px]" fill="none" stroke="#666" strokeWidth="1.200"><path d="M1 4h3l4-3v11L4 9H1zM10.500 4c1 1.500 1 3.500 0 5M12.500 2c2 3 2 6 0 9" /></svg>
        <svg width="12" height="12" viewBox="0 0 12 12" className="mr-[5px]" fill="none" stroke="#777" strokeWidth="1.200"><circle cx="5" cy="5" r="4.200" /><path d="M8 8l3.500 3.500" /></svg>
        <span className="tracking-[0.200px]">100%</span>
      </div>
    </div>
  );
}

function Chrome() {
  return (
    <svg width="16" height="16" viewBox="0 0 16 16" className="flex-none">
      <circle cx="8" cy="8" r="7.500" fill="#fbd12d" />
      <path d="M8 8L1.500 4.200A7.500 7.500 0 0 1 14.500 4.500H8z" fill="#e23c30" />
      <path d="M8 8L1.500 4.200A7.500 7.500 0 0 0 7.500 15.500L11 9.500z" fill="#31a350" />
      <circle cx="8" cy="8" r="3.400" fill="#fff" /><circle cx="8" cy="8" r="2.600" fill="#4285f4" />
    </svg>
  );
}
function WeChat() {
  return (
    <svg width="17" height="15" viewBox="0 0 17 15" className="flex-none">
      <path d="M6.500 0C10 0 12.500 2 12.500 5S10 10 6.500 10l-2-.3L2 11l.6-2C1 8 0 6.700 0 5c0-3 3-5 6.500-5z" fill="#6fcf2e" />
      <circle cx="4.500" cy="3.500" r=".9" fill="#2b6a12" /><circle cx="8.500" cy="3.500" r=".9" fill="#2b6a12" />
      <path d="M11.500 5.500c3 0 5.500 1.800 5.500 4.300 0 1.300-.8 2.400-2 3.200l.4 1.800-2-1-1.900.2C8.500 14 6.500 12 6.500 9.800s2-4.300 5-4.300z" fill="#f4f4f4" />
      <circle cx="10" cy="8.800" r=".7" fill="#777" /><circle cx="13.300" cy="8.800" r=".7" fill="#777" />
    </svg>
  );
}

const apps: { text: string; icon: React.ReactNode; bg: string }[] = [
  { text: '商品管理缺陷报告', bg: 'bg-gradient-to-r from-[#a88f96] via-[#806c70] to-[#97797f]', icon: <svg width="14" height="17" viewBox="0 0 14 17"><path d="M1 1h8l2 2v13H1z" fill="#f0d56a" stroke="#b99a35" /><path d="M4 2h2v14H4z" fill="#fff6c8" /><path d="M9 8h4v8H9z" fill="#e8c850" /></svg> },
  { text: '欧洲团代购——商品...', bg: 'bg-gradient-to-r from-[#a89198] via-[#b9849c] to-[#c4b0c2]', icon: <Chrome /> },
  { text: '信息管理系统界面 - ...', bg: 'bg-gradient-to-r from-[#e4dbe2] via-[#cfaebc] to-[#c4b6c1]', icon: <ELogo size={17} disc={false} /> },
  { text: '微信', bg: 'bg-gradient-to-r from-[#a38f95] via-[#8f7b80] to-[#9a7f87]', icon: <WeChat /> },
  { text: '拿命在加班TAT等2...', bg: 'bg-gradient-to-r from-[#bb8ea4] via-[#bfabbd] to-[#c6b3c5]', icon: <svg width="16" height="16" viewBox="0 0 16 16"><path d="M1 1h14v11H9l-2 3.500V12H1z" fill="#dff2fd" stroke="#3b86b8" /><path d="M4 4.500h8M4 6.800h8M4 9h8" stroke="#2d77b4" /></svg> },
  { text: '信息管理系统界面 - ...', bg: 'bg-gradient-to-r from-[#b7778f] via-[#9c8388] to-[#a68e98]', icon: <svg width="16" height="16" viewBox="0 0 16 16"><circle cx="8" cy="8" r="7.500" fill="#e8641b" /><circle cx="7.500" cy="6" r="5" fill="#1f5fb4" /><path d="M1 5c3 0 3 3 6 3s3 3 6 1c0 4-3 6-6 5.500C2.500 14 0 10 1 5z" fill="#e8501b" /><path d="M12 3c3 3 3 8-1 11 2-4 2-7 1-11z" fill="#ffd23e" /></svg> },
];

function Taskbar() {
  return (
    <div className="relative flex h-[30px] items-center overflow-visible border-t border-[#37262c] bg-[linear-gradient(100deg,#c0aec1_0px,#b9a5b6_50px,#8d7a80_58px,#a87489_66px,#a9748a_95px,#b9a5b6_100px,#7d6468_210px,#8d7276_500px,#a8788c_900px,#6f5f60_1075px,#8b7276_1110px,#75646a_1140px,#8b7276_1160px,#6b5a5e_1190px,#a8788c_1208px,#a8708a_1240px,#79656a_1255px,#bfadc0_1275px,#bdacc0_1370px,#79656a_1378px,#a5778b_1390px,#a9788c_1430px,#77676b_1450px,#8b7379_1480px,#77676b_1500px,#8f767d_1520px,#77676b_1545px,#a7758b_1570px,#a9738b_1600px,#79656a_1610px,#bfadc0_1635px,#bdacc0_1740px,#79656a_1750px,#a9788c_1765px,#a7758b_1800px,#77676b_1830px,#8f747c_1860px,#c4b2c4_1890px,#9a858c_1920px)] text-[12px] text-white">
      <svg width="37" height="37" viewBox="0 0 37 37" className="absolute top-[-6px] left-[9px]">
        <defs><radialGradient id="orb" cx="0.500" cy="0.900" r="0.900"><stop offset="0" stopColor="#29d3f5" /><stop offset="0.500" stopColor="#1d6ea3" /><stop offset="1" stopColor="#86aabd" /></radialGradient></defs>
        <circle cx="18.500" cy="18.500" r="17.700" fill="url(#orb)" stroke="#1c3d52" />
        <path d="M10 11c3-2 5-1.500 8 0l-1.500 7c-3-1.500-5-1.500-8 0z" fill="#f0672a" />
        <path d="M19.500 11.500c3 1.500 5 1.500 8 0l-1.500 7c-3 1.500-5 1.500-8 0z" fill="#8cc63f" />
        <path d="M8 19.500c3-1.500 5-1.500 8 0l-1.500 7c-3-1.500-5-1.500-8 0z" fill="#39a0e8" />
        <path d="M17.500 20c3 1.500 5 1.500 8 0L24 27c-3 1.500-5 1.500-8 0z" fill="#fcc92f" />
      </svg>
      <svg width="16" height="16" viewBox="0 0 16 16" className="ml-[73px] flex-none"><path d="M6 3c4-1 6 2 5 5s-1 5-5 5-6-3-5-6 3-4 5-4z" fill="#d8edf8" stroke="#5ea1c4" /><circle cx="4" cy="7" r="1.300" fill="#e33" /><circle cx="7" cy="5.500" r="1.300" fill="#3a3" /><circle cx="5" cy="10.500" r="1.300" fill="#36c" /><path d="M13.500 1v14" stroke="#e88a1c" strokeWidth="2" /></svg>
      <div className="ml-[17px] flex gap-[3px]">
        {apps.map((a, i) => (
          <div key={i} className={`flex h-[28px] w-[159px] items-center rounded-[2px] border border-[#ddd0d6] pl-[8px] shadow-[0_0_0_1px_#4a393e] ${a.bg}`}>
            <span className="flex w-[17px] justify-center">{a.icon}</span>
            <span className="ml-[3px] whitespace-nowrap [text-shadow:0_0_2px_#00000066]">{a.text}</span>
          </div>
        ))}
      </div>
      <div className="ml-auto flex h-full items-center">
        <span className="mb-[4px] flex h-[15px] w-[15px] items-center justify-center rounded-[2px] bg-[#f4511e] text-[14px] leading-[15px] font-black">S</span>
        <span className="mb-[3px] ml-[7px] flex h-4 w-4 items-center justify-center rounded-full border border-[#cfd8ff] bg-[#1230a0] text-[12px] leading-4 font-bold">?</span>
        <svg width="9" height="20" viewBox="0 0 9 20" className="mb-[5px] ml-[9px]"><path d="M2.500.500h6v4h-6zM.5 2.500h5v4h-5z" fill="#8b7379" stroke="#fff" /><path d="M1 15h6l-3 3.500z" fill="#fff" /></svg>
        <svg width="8" height="6" viewBox="0 0 8 6" className="mt-[3px] ml-[10px]"><path d="M0 5h8L4 0z" fill="#fff" /></svg>
        <svg width="18" height="17" viewBox="0 0 18 17" className="ml-[12px]"><rect x="5" y="0.500" width="12" height="9" fill="#2f6f9c" stroke="#ddd" /><rect x="0.500" y="5.500" width="11" height="8" fill="#3d8bd0" stroke="#ddd" /><path d="M4 15.500h9" stroke="#ccc" strokeWidth="2" /><circle cx="14" cy="4" r="3" fill="#47b347" /><path d="M13 12h4v4h-4z" fill="#e33" /></svg>
        <span className="ml-[6px]"><WeChat /></span>
        <span className="ml-[8px]"><GreenPlus /></span>
        <svg width="16" height="17" viewBox="0 0 16 17" className="ml-[8px]"><ellipse cx="8" cy="8.500" rx="6" ry="7.500" fill="#1a1a1a" /><ellipse cx="8" cy="11" rx="4" ry="4.500" fill="#fff" /><path d="M2 8.500c4 2 8 2 12 0v2.500c-4 2-8 2-12 0z" fill="#ee4a8a" /><circle cx="6.300" cy="4.500" r="1.300" fill="#fff" /><circle cx="9.700" cy="4.500" r="1.300" fill="#fff" /><path d="M6 7h4l-2 1.500zM3 15.500h4M9 15.500h4" fill="#f9a51c" stroke="#f9a51c" strokeWidth="1.500" /><circle cx="13" cy="2.500" r="2.300" fill="#f2589c" /></svg>
        <svg width="16" height="15" viewBox="0 0 16 15" className="ml-[8px]" fill="none" stroke="#fff"><path d="M1 5h2.500L7 1.500v12L3.500 10H1z" fill="#ddd" /><path d="M9 5c1 1.500 1 3.500 0 5M11 3.500c2 2.500 2 5.500 0 8M13 2c3 3.500 3 7.500 0 11" /></svg>
        <svg width="16" height="16" viewBox="0 0 16 16" className="ml-[8px]" fill="none" stroke="#fff" strokeWidth="1.300"><path d="M6 4.500h9v8H6zM8 15h5M10.500 12.500V15M1 1v4h4V1M2 0v2M4 0v2M3 5v8h3" /></svg>
        <svg width="16" height="16" viewBox="0 0 16 16" className="ml-[8px]"><path d="M2 1v15" stroke="#fff" strokeWidth="1.500" /><path d="M3 2h6v2h6l-2 2 1 3H9V8H3z" fill="#fff" /></svg>
        <span className="ml-[19px] w-[44px] text-[12px]">10:00</span>
        <span className="h-[29px] w-[14px] border border-[#d8ccd2] bg-gradient-to-b from-[#cdbfc8] to-[#8a757d]" />
      </div>
    </div>
  );
}

export default function App() {
  return (
    <div className="flex h-[1080px] w-[1920px] flex-col overflow-hidden bg-white [font-family:'Liberation_Sans','Noto_Sans_CJK_SC',sans-serif]">
      <div className="[font-family:'Open_Sans','Noto_Sans_CJK_SC',sans-serif]">
        <div className="relative h-[121px] bg-[#f0f0f0]">
          <TitleRow />
          <div className="absolute top-[9px] left-[10px]"><ELogo size={48} disc /></div>
          <AddressBar />
          <div className="flex h-[37px] items-center pl-[11px] text-[12px] leading-4 text-[#333]">
            {bookmarks.map((b) => <Bookmark key={b.text} b={b} />)}
            <svg width="12" height="10" viewBox="0 0 12 10"><path d="M1 0l5 5-5 5M6 0l5 5-5 5" fill="none" stroke="#888" /></svg>
            <svg width="4" height="16" viewBox="0 0 4 16" className="ml-auto"><path d="M0.500 2h3M0.500 8h3M0.500 14h3" stroke="#ccc" strokeWidth="2.500" /></svg>
            <div className="ml-[14px] flex">{tools.map((b) => <Bookmark key={b.text} b={b} />)}</div>
            <span>更多</span>
            <svg width="10" height="8" viewBox="0 0 12 10" className="mr-[11px] ml-[3px]"><path d="M1 0l5 5-5 5M6 0l5 5-5 5" fill="none" stroke="#888" strokeWidth="1.200" /></svg>
          </div>
          <TabStrip />
        </div>
        <div className="h-[2px] bg-white" />
        <Notice />
      </div>
      <AppHeader />
      <div className="relative flex h-[741px]">
        <Sidebar />
        <div className="flex-1 bg-white">
          <Breadcrumb />
          <FormTabs />
          <Form />
        </div>
        <Trace />
      </div>
      <Footer />
      <div className="[font-family:'Open_Sans','Noto_Sans_CJK_SC',sans-serif]">
        <StatusBar />
        <Taskbar />
      </div>
    </div>
  );
}
